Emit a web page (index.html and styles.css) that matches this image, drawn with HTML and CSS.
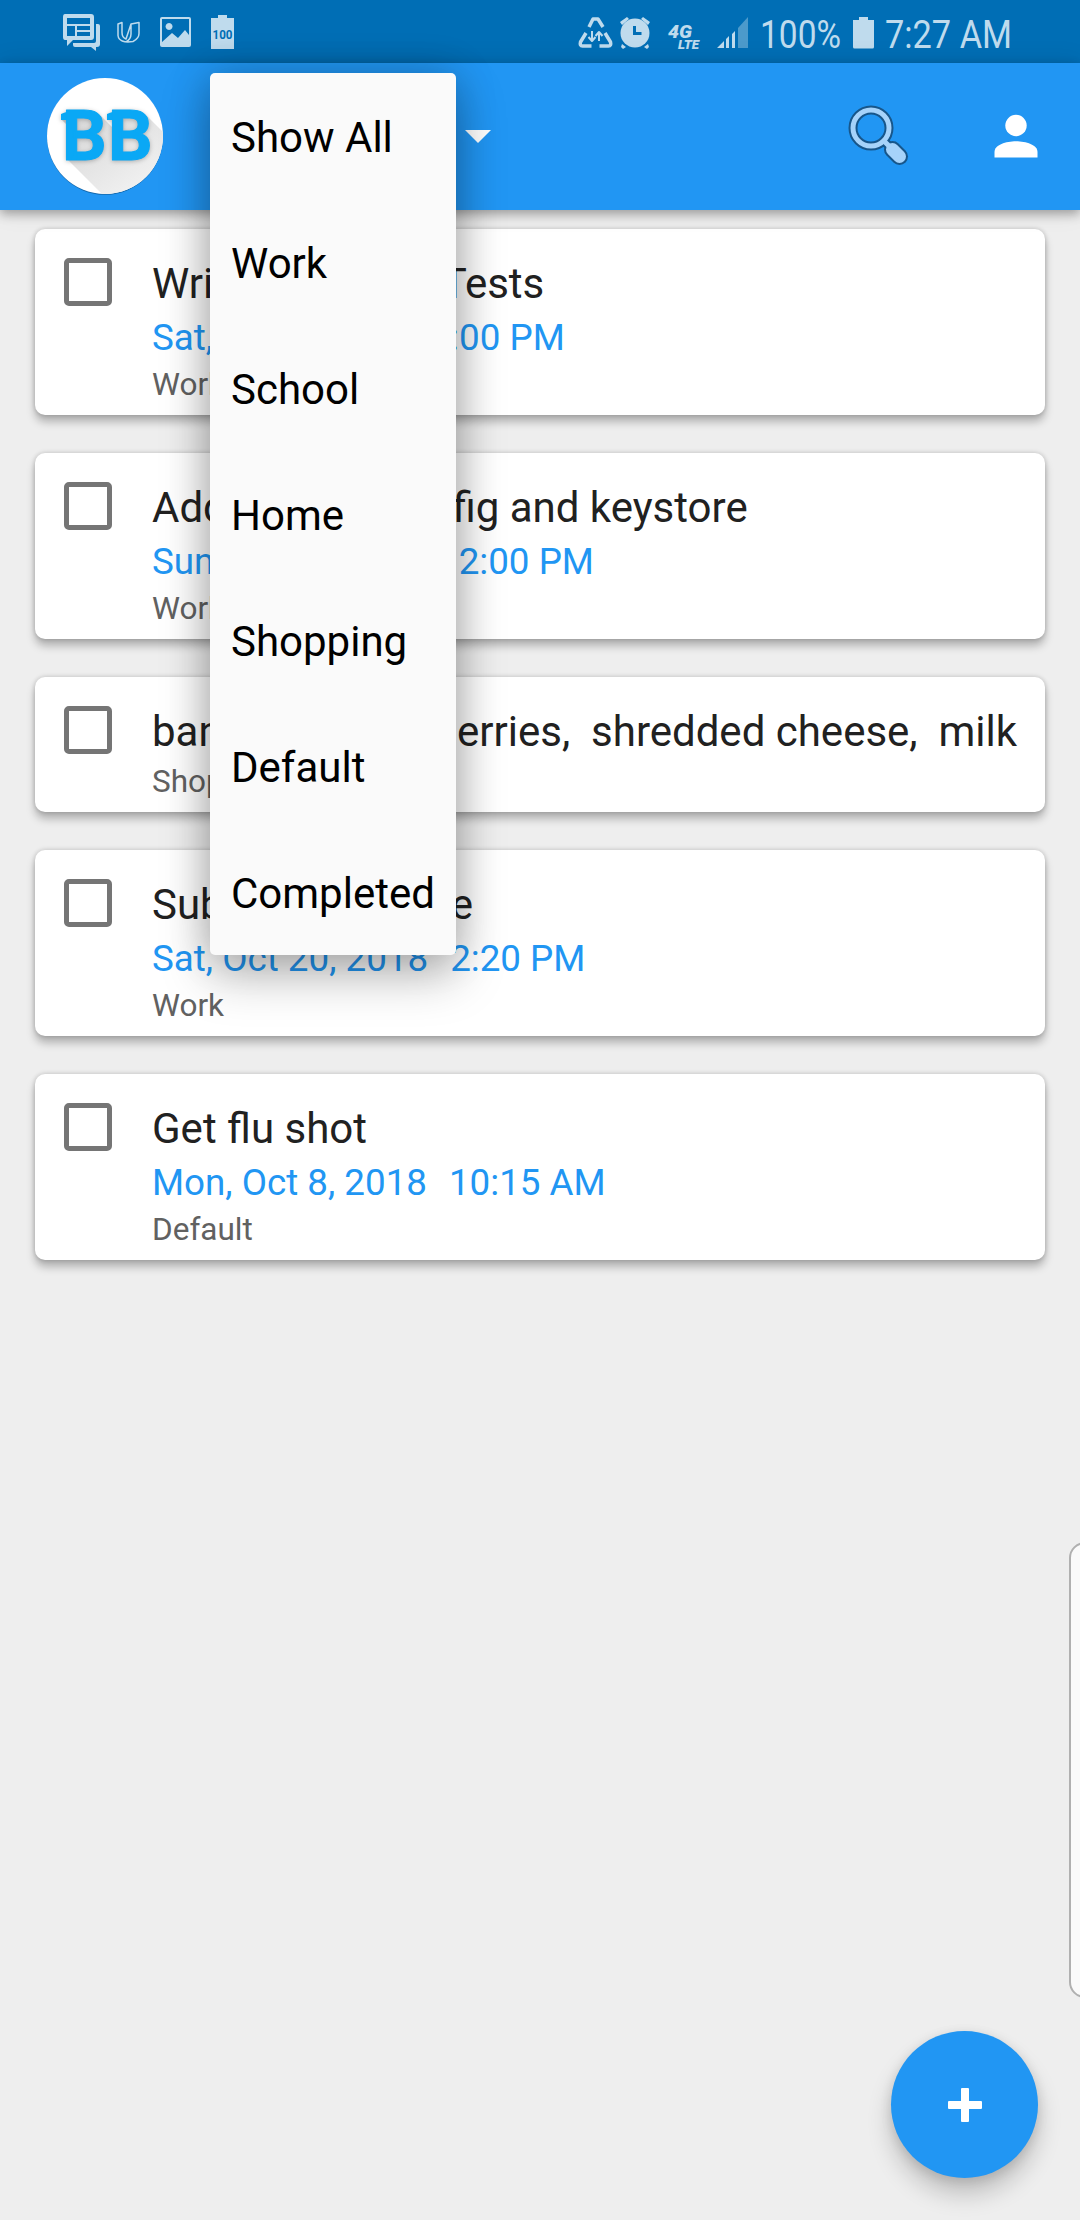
FILE: index.html
```html
<!DOCTYPE html>
<html lang="en">
<head>
<meta charset="utf-8">
<title>Tasks</title>
<link rel="stylesheet" href="styles.css">
</head>
<body>
<div class="screen">
  <header class="status">
    <svg class="status-icons" width="1080" height="63" viewBox="0 0 1080 63">
      <g class="tint">
        <path fill-rule="evenodd" d="M65 14h26q3 0 3 3v20q0 3-3 3H73l-6 6v-6h-2q-2 0-2-3V17q0-3 2-3zm2 4v6h23v-6zm0 8v10h8V26zm10 0v4h13v-4zm0 6v4h13v-4z"/>
        <path d="M96 24h2q2 0 2 2v18q0 3-3 3h-1v4l-5-4H75q-2 0-2-2v-2h21q2 0 2-2z"/>
        <path fill-rule="evenodd" d="M162 17h27q2 0 2 2v26q0 2-2 2h-27q-2 0-2-2V19q0-2 2-2zm0 2v23l10-9 6 5 7-8 4 5V19zm7 4a3.500 3.500 0 1 0 .1 0z"/>
        <path d="M211 18h7v-3h9v3h7v31h-23z"/>
        <circle cx="635" cy="33" r="14.500"/>
        <path d="M620 22l7-5 2 2-7 6zM650 22l-7-5-2 2 7 6zM622 44l4 3-3 2-2-2zM648 44l-4 3 3 2 2-2z"/>
        <path d="M717 48l7-7v7zM726 39l3-3v12h-3zM732 34l3-3v17h-3z"/>
        <path opacity=".4" d="M738 28l10-11v31h-10z"/>
        <path d="M853 20h6v-3h9v3h6v27q0 1.500-1.500 1.500h-18q-1.500 0-1.500-1.500z"/>
      </g>
      <g class="line">
        <path d="M118 24l4-1.500v10q0 5 4 6.500l5-15 8-1.500v11q0 5-6 8-14 2-15-6zM131 24v10q0 5-5 8" stroke-width="1.500"/>
        <path d="M589 27l4-8h5l5 8M586 33l-5.500 9q-1 4 2 4h9M605 33l5.500 9q1 4-2 4h-9" stroke-width="3.500"/>
        <path d="M592 31v9m-3.500-3l3.500 4 3.500-4M599 41v-8m-3.500 3l3.500-4 3.500 4" stroke-width="2"/>
      </g>
      <path class="clock-hand" d="M634.500 26v7.500h7"/>
      <text class="badge-100" x="212.500" y="39" textLength="20" lengthAdjust="spacingAndGlyphs">100</text>
      <text class="net" x="668" y="38" font-size="19" textLength="24" lengthAdjust="spacingAndGlyphs">4G</text>
      <text class="net" x="678" y="49" font-size="13.500" textLength="21" lengthAdjust="spacingAndGlyphs">LTE</text>
      <text class="clock" x="760" y="48" textLength="81" lengthAdjust="spacingAndGlyphs">100%</text>
      <text class="clock" x="885" y="48" textLength="127" lengthAdjust="spacingAndGlyphs">7:27 AM</text>
    </svg>
  </header>

  <nav class="appbar">
    <svg class="logo" width="120" height="124" viewBox="45 74 120 124">
      <defs>
        <clipPath id="disc"><circle cx="105" cy="136" r="58"/></clipPath>
        <linearGradient id="fade" x1="0" y1="0" x2="1" y2="1"><stop offset="0" stop-color="#d4d4d4"/><stop offset=".8" stop-color="#f4f4f4"/></linearGradient>
      </defs>
      <circle class="logo-edge" cx="105" cy="136.800" r="58"/>
      <circle cx="105" cy="136" r="58" fill="#fff"/>
      <path clip-path="url(#disc)" fill="url(#fade)" d="M61 119L67 125V159L111 203H190V159L147 116H118V133L101 116z"/>
      <g class="logo-text">
        <path d="M61 114q6-3 14-3v9H61zM107 114q6-3 14-3v9h-14z"/>
        <text x="62" y="160">B</text><text x="108" y="160">B</text>
      </g>
    </svg>
    <svg class="caret" width="26" height="13" viewBox="0 0 26 13"><path d="M0 0h26L13 13z"/></svg>
    <svg class="search" width="64" height="64" viewBox="0 0 64 64">
      <g fill="none" stroke-linecap="round" stroke-linejoin="round">
        <circle cx="23" cy="23" r="18" stroke="#17568a" stroke-width="9"/>
        <path d="M36 36l5 5" stroke="#17568a" stroke-width="9"/>
        <path d="M44.500 44.500l7 7" stroke="#17568a" stroke-width="17"/>
        <circle cx="23" cy="23" r="18" stroke="#a6d3fa" stroke-width="5"/>
        <path d="M36 36l5 5" stroke="#a6d3fa" stroke-width="5"/>
        <path d="M44.500 44.500l7 7" stroke="#a6d3fa" stroke-width="13"/>
      </g>
    </svg>
    <svg class="person" width="44" height="44" viewBox="0 0 44 44"><circle cx="22" cy="11.500" r="10.700"/><path d="M.5 43.500v-5.500C.5 31 12 27.300 22 27.300S43.500 31 43.500 38v5.500z"/></svg>
  </nav>

  <main class="list">
    <article class="card"><span class="check"></span><div class="body"><h2 class="title">Write Espresso Tests</h2><p class="due"><span>Sat, Oct 6, 2018</span><span>2:00 PM</span></p><p class="tag">Work</p></div></article>
    <article class="card"><span class="check"></span><div class="body"><h2 class="title">Add signing config and keystore</h2><p class="due"><span>Sun, Oct 7, 2018</span><span>12:00 PM</span></p><p class="tag">Work</p></div></article>
    <article class="card undated"><span class="check"></span><div class="body"><h2 class="title groceries"><span>bananas,</span><span>blueberries,&nbsp; shredded cheese,&nbsp; milk</span></h2><p class="tag">Shopping</p></div></article>
    <article class="card"><span class="check"></span><div class="body"><h2 class="title">Submit Capstone</h2><p class="due"><span>Sat, Oct 20, 2018</span><span>2:20 PM</span></p><p class="tag">Work</p></div></article>
    <article class="card"><span class="check"></span><div class="body"><h2 class="title">Get flu shot</h2><p class="due"><span>Mon, Oct 8, 2018</span><span>10:15 AM</span></p><p class="tag">Default</p></div></article>
  </main>

  <ul class="menu">
    <li>Show All</li><li>Work</li><li>School</li><li>Home</li><li>Shopping</li><li>Default</li><li>Completed</li>
  </ul>
  <div class="edge-panel"></div>
  <button class="fab" aria-label="Add"><svg width="36" height="36" viewBox="0 0 36 36"><path d="M15 1h6q1 0 1 1v12h12q1 0 1 1v6q0 1-1 1H22v12q0 1-1 1h-6q-1 0-1-1V22H2q-1 0-1-1v-6q0-1 1-1h12V2q0-1 1-1z"/></svg></button>
</div>
</body>
</html>
```
FILE: styles.css
```css
* { box-sizing: border-box; margin: 0; padding: 0; }
body { font-family: Roboto, "Liberation Sans", sans-serif; }
.screen { position: relative; width: 1080px; height: 2220px; overflow: hidden; background: #eee; display: flex; flex-direction: column; }

.status { height: 63px; background: #006eb5; }
.status-icons { display: block; }
.tint { fill: #bfdbed; }
.line { fill: none; stroke: #bfdbed; stroke-linejoin: round; }
.clock-hand { fill: none; stroke: #006eb5; stroke-width: 3; }
.badge-100 { font-size: 13px; font-weight: 700; fill: #006eb5; }
.net { font-weight: 900; font-style: italic; fill: #bfdbed; }
.clock { font-size: 39px; fill: #bfdbed; }

.appbar { position: relative; height: 147px; padding: 11px 42px 0 45px; display: flex; align-items: flex-start; background: #2196f3; box-shadow: 0 4px 10px rgba(0,0,0,.3), 0 0 24px rgba(0,0,0,.1); }
.logo-edge { fill: #1569ad; }
.logo-text { fill: #0aa8f5; font-size: 70px; font-weight: 700; filter: drop-shadow(0 1px 2px rgba(0,0,0,.25)); }
.logo-text text { stroke: #0aa8f5; stroke-width: 1px; stroke-linejoin: round; }
.caret { fill: #fff; margin: 56px 0 0 300px; }
.search { margin: 31px 0 0 357px; }
.person { fill: #fff; margin: 40px 0 0 auto; }

.list { padding: 19px 35px; display: flex; flex-direction: column; gap: 38px; }
.card { display: flex; align-items: flex-start; background: #fff; border-radius: 10px; padding: 29px 0 8px 29px; box-shadow: 0 7px 9px rgba(0,0,0,.25), 0 0 5px rgba(0,0,0,.2); }
.check { width: 48px; height: 48px; border: 5px solid #757575; border-radius: 5px; flex: none; }
.body { margin-left: 40px; padding-top: 1px; white-space: nowrap; }
.title { font-size: 42px; line-height: 50px; font-weight: 400; color: #212121; }
.groceries { display: flex; justify-content: space-between; width: 865px; }
.due { display: flex; gap: 22px; font-size: 36.750px; line-height: 51px; margin-top: 3px; color: #2196f3; }
.tag { font-size: 31.500px; line-height: 44px; color: #616161; }
.undated .tag { margin-top: 3px; }

.menu { position: absolute; left: 210px; top: 73px; width: 246px; list-style: none; background: #fafafa; border-radius: 5px; box-shadow: 0 20px 50px rgba(0,0,0,.27), 0 0 42px rgba(0,0,0,.2); }
.menu li { height: 126px; line-height: 130px; padding-left: 21px; font-size: 42px; color: #000; }
.edge-panel { position: absolute; right: -30px; top: 1542px; width: 41px; height: 456px; background: #fafafa; border: 2px solid #b0b0b0; border-radius: 16px; }
.fab { position: absolute; left: 891px; top: 2031px; width: 147px; height: 147px; border: 0; border-radius: 50%; background: #2196f3; display: flex; align-items: center; justify-content: center; box-shadow: 0 16px 24px rgba(0,0,0,.2), 0 3px 12px rgba(0,0,0,.12); }
.fab svg { fill: #fff; }
```
